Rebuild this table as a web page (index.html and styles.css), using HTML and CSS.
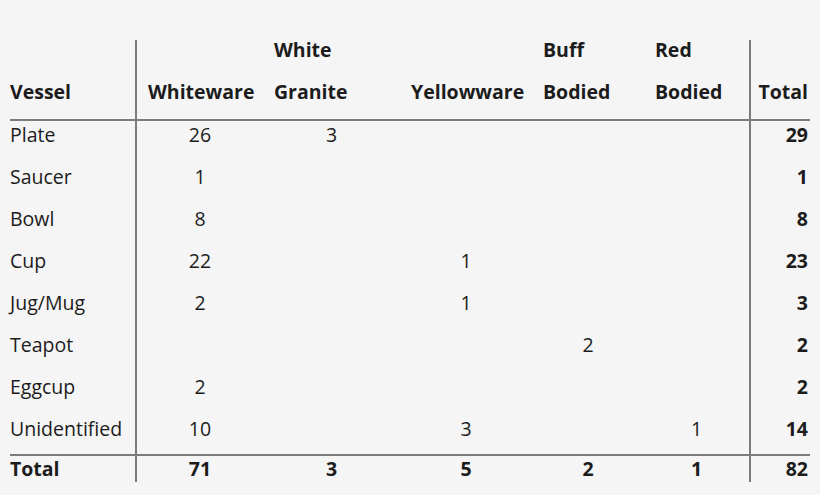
FILE: index.html
```html
<!DOCTYPE html>
<html lang="en">
<head>
<meta charset="utf-8">
<title>Vessel table</title>
<link rel="stylesheet" href="styles.css">
</head>
<body>
<table class="vessels">
  <colgroup>
    <col class="c-vessel"><col class="c-white"><col class="c-granite"><col class="c-yellow"><col class="c-buff"><col class="c-red"><col class="c-total">
  </colgroup>
  <thead>
    <tr>
      <th class="name"><span class="ln">Vessel</span></th>
      <th class="first"><span class="ln">Whiteware</span></th>
      <th><span class="ln">White</span><span class="ln">Granite</span></th>
      <th><span class="ln">Yellowware</span></th>
      <th><span class="ln">Buff</span><span class="ln">Bodied</span></th>
      <th><span class="ln">Red</span><span class="ln">Bodied</span></th>
      <th class="total"><span class="ln">Total</span></th>
    </tr>
  </thead>
  <tbody>
    <tr><td class="name">Plate</td><td class="first">26</td><td>3</td><td></td><td></td><td></td><td class="total">29</td></tr>
    <tr><td class="name">Saucer</td><td class="first">1</td><td></td><td></td><td></td><td></td><td class="total">1</td></tr>
    <tr><td class="name">Bowl</td><td class="first">8</td><td></td><td></td><td></td><td></td><td class="total">8</td></tr>
    <tr><td class="name">Cup</td><td class="first">22</td><td></td><td>1</td><td></td><td></td><td class="total">23</td></tr>
    <tr><td class="name">Jug/Mug</td><td class="first">2</td><td></td><td>1</td><td></td><td></td><td class="total">3</td></tr>
    <tr><td class="name">Teapot</td><td class="first"></td><td></td><td></td><td>2</td><td></td><td class="total">2</td></tr>
    <tr><td class="name">Eggcup</td><td class="first">2</td><td></td><td></td><td></td><td></td><td class="total">2</td></tr>
    <tr><td class="name">Unidentified</td><td class="first">10</td><td></td><td>3</td><td></td><td>1</td><td class="total">14</td></tr>
  </tbody>
  <tfoot>
    <tr><td class="name">Total</td><td class="first">71</td><td>3</td><td>5</td><td>2</td><td>1</td><td class="total">82</td></tr>
  </tfoot>
</table>
</body>
</html>
```
FILE: styles.css
```css
html, body {
  margin: 0;
  padding: 0;
  background: #f5f5f5;
}

body {
  padding: 40px 10px 0 10px;
  font-family: "Open Sans", "Noto Sans", "Liberation Sans", sans-serif;
  font-size: 19.5px;
  color: #1c1c1c;
}

.vessels {
  border-collapse: collapse;
  table-layout: fixed;
  width: 800px;
}

.c-vessel { width: 126px; }
.c-white { width: 127px; }
.c-granite { width: 137px; }
.c-yellow { width: 132px; }
.c-buff { width: 112px; }
.c-red { width: 106px; }
.c-total { width: 60px; }

.vessels th,
.vessels td {
  padding: 0;
  line-height: 20px;
  white-space: nowrap;
}

.vessels th {
  font-weight: 700;
  text-align: left;
  vertical-align: bottom;
  height: 62px;
  padding: 0 0 17px 11px;
  border-bottom: 2px solid #7c7c7c;
}

.vessels th .ln {
  display: block;
}

.vessels th .ln + .ln {
  margin-top: 22px;
}

.vessels td {
  text-align: center;
  vertical-align: top;
  height: 20px;
  padding: 4px 0 18px 0;
}

.vessels tbody tr:last-child td {
  padding-bottom: 15px;
}

.vessels .name {
  text-align: left;
  padding-left: 0;
}

.vessels .first {
  border-left: 2px solid #7c7c7c;
}

.vessels .total {
  border-left: 2px solid #7c7c7c;
  text-align: right;
  padding-right: 2px;
  padding-left: 0;
  font-weight: 700;
}

.vessels tfoot td {
  font-weight: 700;
  border-top: 2px solid #7c7c7c;
  padding: 3px 0 3px 0;
}

.vessels tfoot td.total {
  padding-right: 2px;
}
```
